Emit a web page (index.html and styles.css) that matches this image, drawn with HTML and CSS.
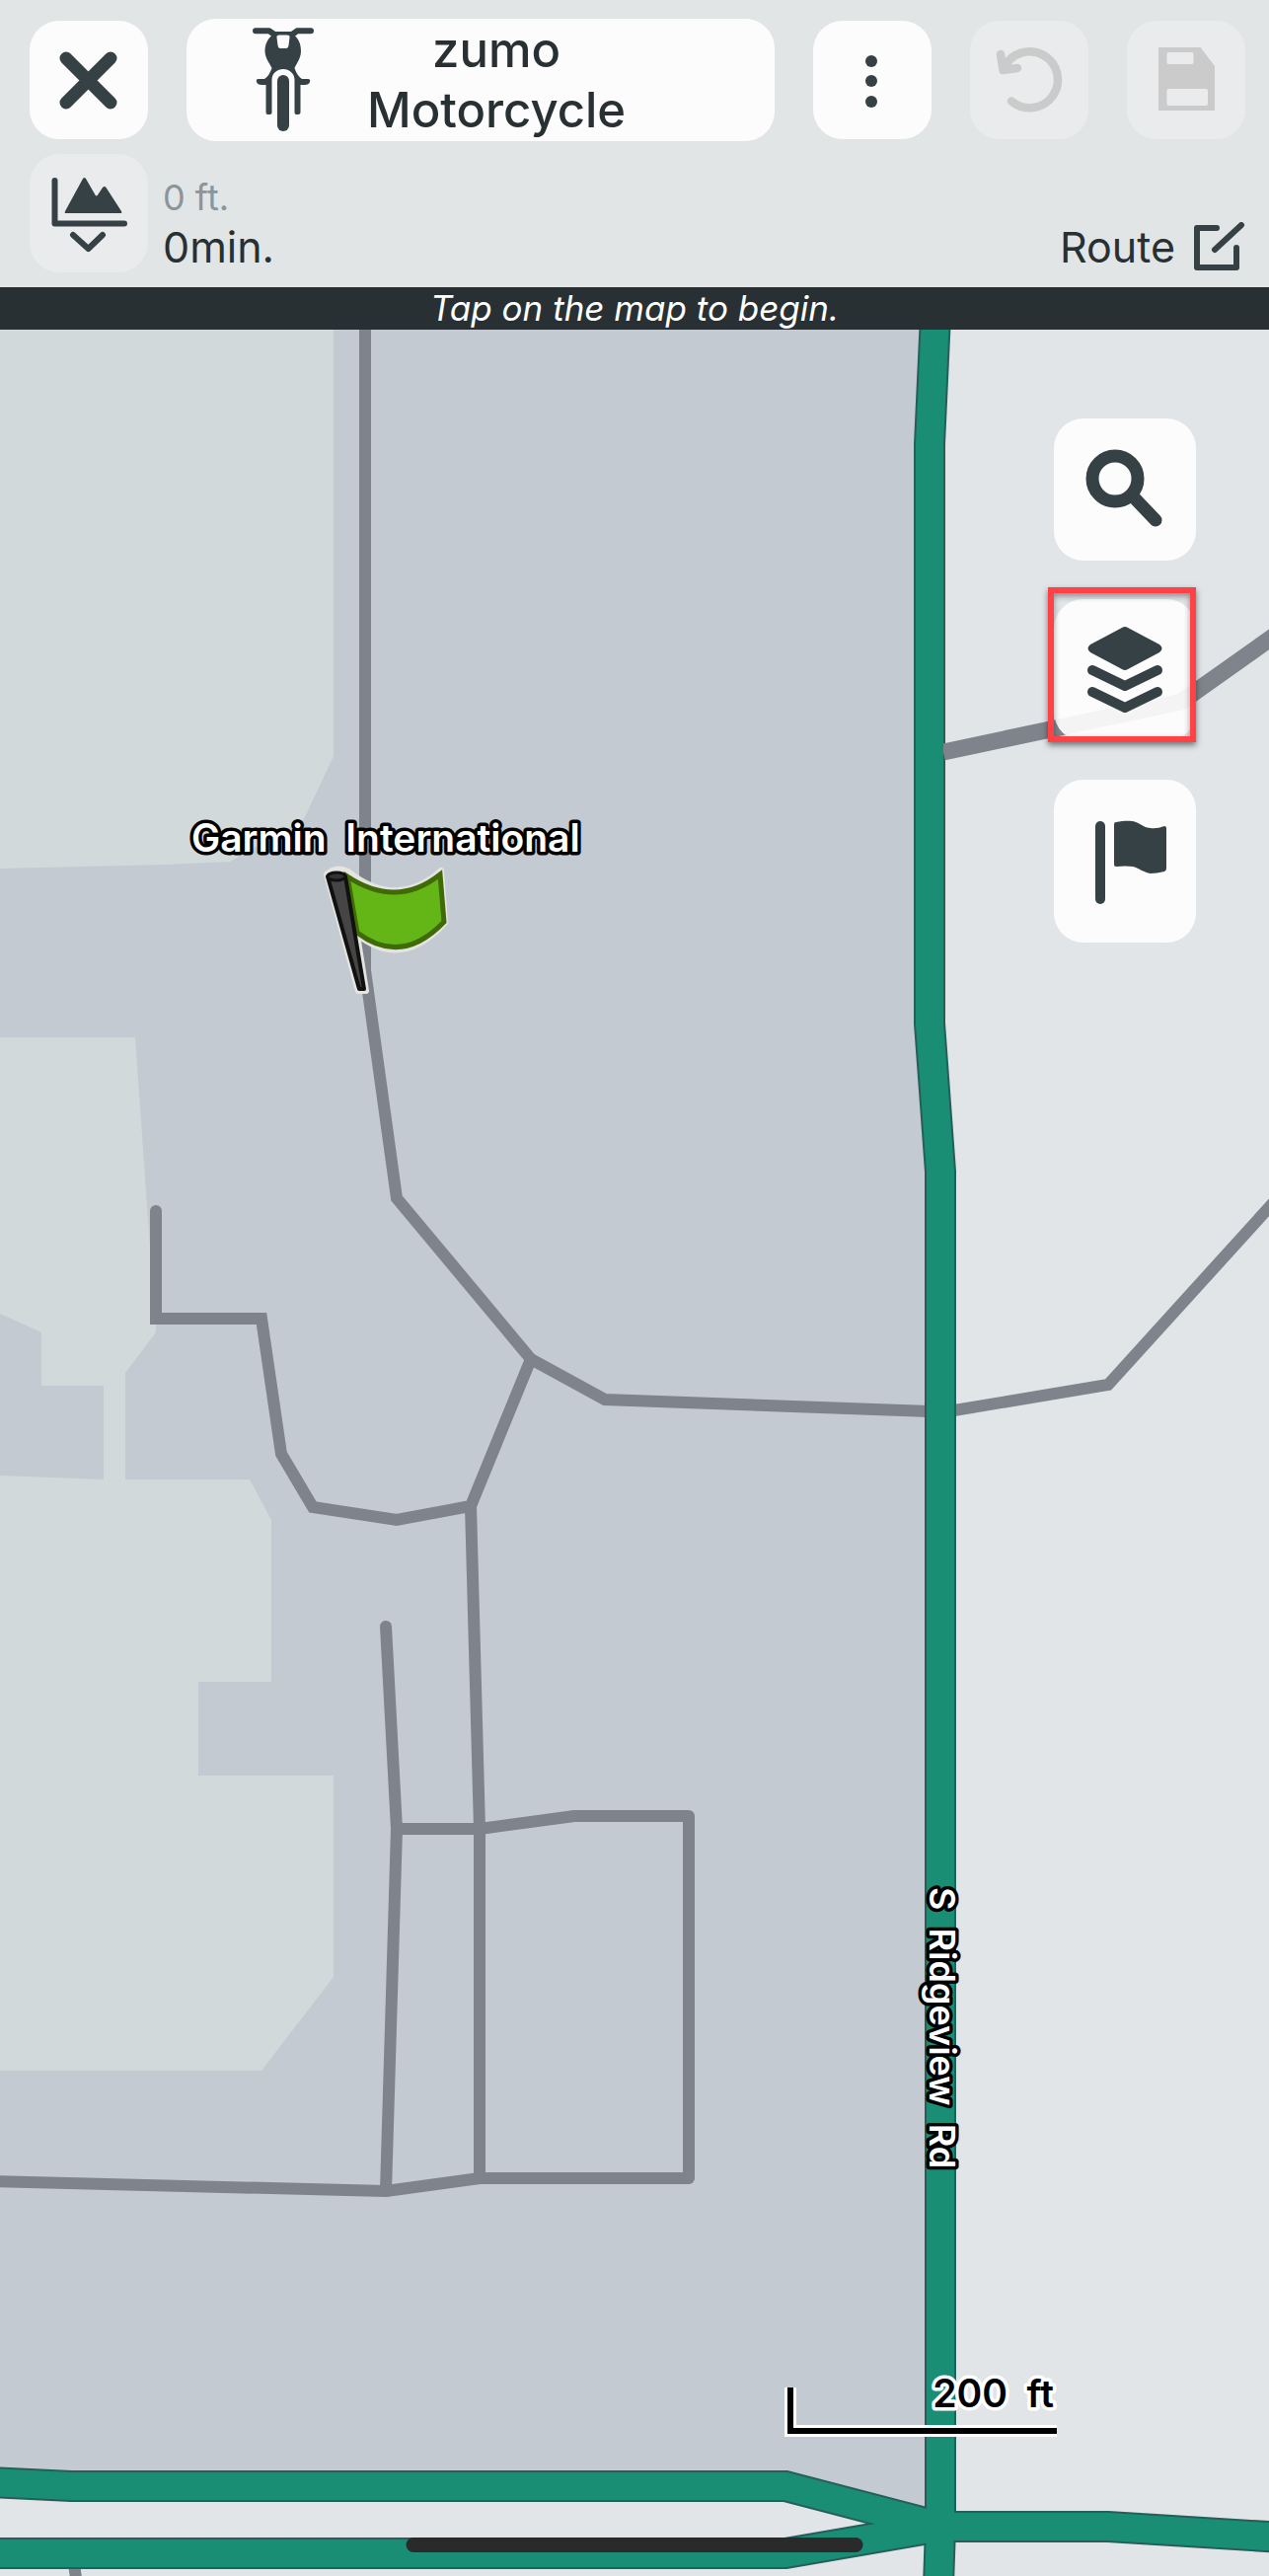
FILE: index.html
```html
<!DOCTYPE html>
<html lang="en">
<head>
  <meta charset="utf-8" />
  <meta name="viewport" content="width=device-width, initial-scale=1" />
  <title>Route Planner</title>
  <link rel="stylesheet" href="styles.css">
</head>
<body>
  <header class="toolbar">
    <div class="toolbar-row">
      <button class="tile" type="button" aria-label="Close">
        <svg viewBox="0 0 120 120" class="line"><path stroke-width="13" d="M37 38 82 83M82 38 37 83" /></svg>
      </button>

      <button class="profile" type="button">
        <svg class="bike" viewBox="0 0 62 106" aria-hidden="true">
          <path class="line" stroke-width="6" d="M3 3.3H17L22 7H40L45 3.3H59" />
          <path d="M21 7H41C47 11 49 17 49 24C49 31 44 37 42.500 41C44 46 47 50 50 52H56Q59 52 58 55Q57 58 53 58H48.500V86Q48.500 88 46 88H44.500Q42.500 88 42.500 86V53C42.500 46 37 42 31 42C25 42 19.500 46 19.500 53V86Q19.500 88 17.500 88H15.500Q13.500 88 13.500 86V58H9Q5 58 4 55Q3 52 6 52H12C15 50 18 46 19.500 41C18 37 12.500 31 12.500 24C12.500 17 15 11 21 7Z" />
          <path class="lamp" d="M27 7.500H35Q38 7.500 37.500 10L36.500 18Q36 21 34 21H28Q26 21 25.500 18L24.500 10Q24 7.500 27 7.500Z" />
          <rect x="25" y="48" width="12" height="57" rx="6" />
        </svg>
        <span>zumo<br>Motorcycle</span>
      </button>

      <button class="tile" type="button" aria-label="More options">
        <svg viewBox="0 0 120 120"><circle cx="59" cy="41" r="6" /><circle cx="59" cy="61" r="6" /><circle cx="59" cy="82" r="6" /></svg>
      </button>
      <button class="tile muted" type="button" aria-label="Undo" disabled>
        <svg viewBox="0 0 120 120" class="line"><path stroke-width="8.500" d="M42 81.500A28.500 28.500 0 1 0 34.500 48M31 34 33.500 50 48 48" /></svg>
      </button>
      <button class="tile muted" type="button" aria-label="Save" disabled>
        <svg viewBox="0 0 120 120"><path fill-rule="evenodd" d="M33 27H74.500L89 46V90Q89 91 88 91H33Q32 91 32 90V28Q32 27 33 27ZM42 32Q40.500 32 40.500 34V42Q40.500 44 42 44H66Q67.500 44 67.500 42V34Q67.500 32 66 32ZM42 69Q40.500 69 40.500 71V84Q40.500 86 42 86H80Q82 86 82 84V71Q82 69 80 69Z" /></svg>
      </button>
    </div>

    <div class="toolbar-row summary">
      <button class="tile soft" type="button" aria-label="Show elevation profile">
        <svg viewBox="0 0 120 120">
          <path class="line" stroke-width="6" d="M25.500 27V70.500H96M44 82 59.500 96 74 82" />
          <path d="M37 60Q35 60 36 58L54 25Q55.500 23 57 25L66.500 41.500Q67.500 43.500 69 41.500L74 34Q76 32 77.500 34L93 58Q94 60 92 60Z" />
        </svg>
      </button>
      <div class="stats">
        <span class="distance">0 ft.</span>
        <span class="duration">0min.</span>
      </div>
      <button class="route" type="button">
        Route
        <svg class="line" viewBox="0 0 52 50" aria-hidden="true"><path stroke-width="6" d="M23 6H3V46H43V26M48 3 21 28" /></svg>
      </button>
    </div>
  </header>

  <p class="hint">Tap on the map to begin.</p>

  <main class="map">
    <svg class="map-canvas" viewBox="0 334 1286 2276" role="img" aria-label="Map around Garmin International">
      <path class="district" d="M0 334H948L942 450V1037L953 1187V2560L796 2519H72L0 2515Z" />

      <!-- parking and green areas -->
      <path class="park" d="M0 334H338V766L308 830 233 873 170 876 0 880Z" />
      <path class="park" d="M0 1051H137L152 1264 158 1270V1350L127 1391V1499H253L275 1540V1704H201V1799H338V2003L265 2098H0V1495L105 1499V1404H42V1350L0 1331Z" />

      <!-- side streets -->
      <g class="street">
        <path d="M370 320V983L402 1214 538 1377 613 1418 942 1430" />
        <path d="M955 1431 1123 1403 1300 1208" />
        <path d="M538 1377 477 1526 402 1540 317 1527 285 1473 265 1336H158V1227" />
        <path d="M477 1526 486 1853V2207" />
        <path d="M391 1648 402 1853 391 2220" />
        <path class="loop" d="M402 1853H486L582 1840H698V2207H486L391 2220-10 2210" />
        <path d="M74 2590 78 2620" />
      </g>

      <!-- main roads: casing first, fill on top -->
      <g class="artery-edge">
        <path d="M948 320 942 450V1037L953 1187V2560L951 2620" />
        <path d="M-10 2515 72 2519H796L953 2560 1123 2560 1300 2571" />
        <path d="M-10 2587H796L953 2560" />
      </g>
      <path class="street wide" d="M956 762 1197 711 1300 638" />
      <g class="artery">
        <path d="M948 320 942 450V1037L953 1187V2560L951 2620" />
        <path d="M-10 2515 72 2519H796L953 2560 1123 2560 1300 2571" />
        <path d="M-10 2587H796L953 2560" />
      </g>

      <!-- waypoint flag -->
      <g class="waypoint">
        <path class="halo" d="M331 886Q341 877 353 883Q402 922 447 882L451 935Q407 983 362 947L371 1004H363Z" />
        <path class="flag-cloth" d="M352 888Q402 921 446 886L450 934Q407 979 362 945Z" />
        <path class="flag-pole" d="M332 888 350 888 369 1002H364Z" />
        <ellipse class="flag-cap" cx="341" cy="888" rx="9" ry="4" />
      </g>

      <text class="label" x="194" y="863">Garmin&#160; International</text>
      <text class="label road-label" transform="translate(942 1912) rotate(90)">S&#160; Ridgeview&#160; Rd</text>

      <!-- scale bar -->
      <path class="scale-halo" d="M801 2419V2463H1071" />
      <path class="scale" d="M801 2419V2463H1071" />
      <text class="label scale-label" x="1068" y="2439" text-anchor="end">200&#160; ft</text>
    </svg>

    <div class="controls">
      <button class="control" type="button" aria-label="Search">
        <svg viewBox="0 0 144 144" class="line"><circle cx="62" cy="61" r="23" stroke-width="13" /><path stroke-width="13" d="M82 81 103 103" /></svg>
      </button>
      <button class="control highlighted" type="button" aria-label="Map layers">
        <svg viewBox="0 0 144 144">
          <path d="M69 29Q72 27 75 29L107 46Q112 50 107 54L75 71Q72 73 69 71L37 54Q32 50 37 46Z" />
          <path class="line" stroke-width="10" d="M39 72 72 88 105 72M39 94 72 110 105 94" />
        </svg>
      </button>
      <button class="control tall" type="button" aria-label="Waypoints">
        <svg viewBox="0 0 144 165">
          <rect x="42" y="42" width="10" height="84" rx="5" />
          <path d="M61 45Q61 43 63 43C70 42 77 41 83 43C90 46 93 49 98 49Q104 50 112 47Q114 47 114 49V90Q114 92 112 93Q104 95 98 95C91 94 87 90 80 88Q73 87 63 88Q61 88 61 86Z" />
        </svg>
      </button>
    </div>

    <div class="home-indicator"></div>
  </main>
</body>
</html>
```
FILE: styles.css
```css
/* === Tokens === */
:root{
  --c-ink:#283033;
  --c-icon:#364145;
  --c-bar:#e1e5e6;
  --c-tile:#fcfcfc;
  --c-tile-soft:#e9ebec;
  --c-disabled:#cbcbcb;
  --c-land:#e1e5e8;
  --c-district:#c3cad2;
  --c-park:#d1d9da;
  --c-street:#7f838b;
  --c-artery:#1a8d75;
  --c-artery-edge:#265e59;
  --c-alert:#ff4245;
  --radius:30px;
}

/* === Base === */
*,*::before,*::after{box-sizing:border-box;margin:0;padding:0;}

body{
  font-family:Inter,"Liberation Sans",sans-serif;
  color:var(--c-ink);
  background:var(--c-land);
}

button{
  border:0;
  background:none;
  font:inherit;
  color:inherit;
  cursor:pointer;
}
button:disabled{cursor:default;}

svg{display:block;fill:var(--c-icon);}
.line{
  fill:none;
  stroke:var(--c-icon);
  stroke-linecap:round;
  stroke-linejoin:round;
}

/* === Toolbar === */
.toolbar{
  display:flex;
  flex-direction:column;
  gap:13px;
  padding:19px 24px 15px 30px;
  background:var(--c-bar);
}
.toolbar-row{
  display:flex;
  align-items:center;
  gap:39px;
}

.tile{
  flex:none;
  width:120px;
  height:120px;
  border-radius:var(--radius);
  background:var(--c-tile);
}
.tile.soft,
.tile.muted{background:var(--c-tile-soft);}
.tile.muted svg{fill:var(--c-disabled);}
.tile.muted .line{fill:none;stroke:var(--c-disabled);}

.profile{
  flex:1;
  display:flex;
  align-items:center;
  gap:54px;
  height:124px;
  padding-left:67px;
  border-radius:var(--radius);
  background:var(--c-tile);
  font-size:49px;
  font-weight:500;
  line-height:61px;
}
.bike{flex:none;width:62px;height:106px;}
.lamp{fill:var(--c-tile);}

.summary{align-items:flex-end;gap:15px;}
.stats{display:flex;flex-direction:column;}
.distance{
  font-size:36px;
  line-height:48px;
  color:#8a9699;
}
.duration,
.route{
  font-size:43px;
  line-height:52px;
}
.route{
  display:flex;
  align-items:center;
  gap:19px;
  margin-left:auto;
}
.route svg{width:52px;height:50px;}

.hint{
  font-size:35px;
  font-style:italic;
  line-height:43px;
  text-align:center;
  color:#fff;
  background:var(--c-ink);
}

/* === Map === */
.map{position:relative;overflow:hidden;}
.map-canvas{width:100%;height:auto;}

.district{fill:var(--c-district);}
.park{fill:var(--c-park);}

.street{fill:none;stroke:var(--c-street);stroke-width:12px;stroke-linecap:round;}
.street .loop{stroke-linejoin:round;}
.street.wide{stroke-width:17px;stroke-linecap:butt;}

.artery-edge{fill:none;stroke:var(--c-artery-edge);stroke-width:32px;}
.artery{fill:none;stroke:var(--c-artery);stroke-width:28px;}

.halo{fill:#e4e4e0;stroke:#e4e4e0;stroke-width:6px;stroke-linejoin:round;}
.flag-cloth{fill:#63b615;stroke:#3f6a05;stroke-width:5px;}
.flag-pole{fill:#454545;stroke:#111;stroke-width:4px;stroke-linejoin:round;}
.flag-cap{fill:#333;stroke:#111;stroke-width:3px;}

.label{
  font-size:39px;
  font-weight:600;
  fill:#fff;
  stroke:#000;
  stroke-width:7px;
  stroke-linejoin:round;
  paint-order:stroke;
}
.road-label{font-size:36px;}
.scale-label{fill:#000;stroke:#fff;}
.scale,
.scale-halo{fill:none;stroke:#000;stroke-width:6px;}
.scale-halo{stroke:#fff;stroke-width:12px;}

/* === Map controls === */
.controls{
  position:absolute;
  top:90px;
  right:74px;
  display:flex;
  flex-direction:column;
  gap:39px;
}
.control{
  position:relative;
  width:144px;
  height:144px;
  border-radius:var(--radius);
  background:rgba(254,254,254,.92);
}
.control.tall{height:165px;}

.highlighted::after{
  content:"";
  position:absolute;
  inset:-12px 0 -1px -6px;
  border:6px solid var(--c-alert);
  box-shadow:0 3px 6px rgba(0,0,0,.5),inset 0 3px 6px rgba(0,0,0,.4);
}

.home-indicator{
  position:absolute;
  bottom:24px;
  left:50%;
  width:36%;
  height:15px;
  border-radius:8px;
  background:#2a2a2a;
  transform:translateX(-50%);
}
```
